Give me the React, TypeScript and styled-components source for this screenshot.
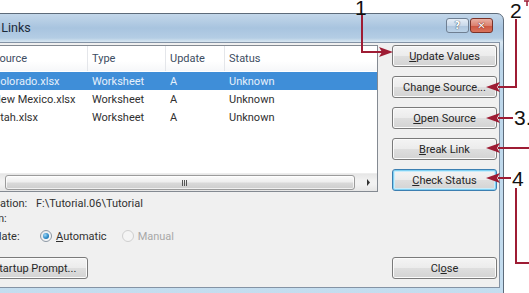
import React from "react";
import styled, { createGlobalStyle, css } from "styled-components";

const Global = createGlobalStyle`
  html, body { margin: 0; padding: 0; background: #ffffff; }
  body { font-family: Roboto, "Noto Sans", "DejaVu Sans", sans-serif; }
  * { box-sizing: border-box; }
`;

const Viewport = styled.div`
  position: relative;
  width: 529px;
  height: 293px;
  overflow: hidden;
  background: #ffffff;
  padding-top: 13px;
`;

const Dialog = styled.div`
  margin-left: -34px;
  width: 538px;
  height: 300px;
  border: 1px solid #5d6b7a;
  border-radius: 7px 7px 0 0;
  background: linear-gradient(to bottom, #c3d7ea 0%, #a8c4df 14px, #b4cde4 24px, #d9e7f2 28px, #bcd6ea 40px, #c5def0 100%);
  display: flex;
  flex-direction: column;
  padding: 0 3px;
`;

const TitleBar = styled.div`
  height: 28px;
  display: flex;
  align-items: flex-start;
  justify-content: space-between;
  padding: 0 7px 0 7px;
`;

const Title = styled.div`
  font-size: 12.5px;
  color: #1c2a3a;
  line-height: 28px;
  padding-bottom: 2px;
`;

const CaptionGroup = styled.div`
  display: flex;
  margin-top: 4px;
  gap: 1px;
`;

const CaptionButton = styled.div<{ $kind: "help" | "close" }>`
  width: 23px;
  height: 15px;
  border: 1px solid #6f7f92;
  border-radius: 3px;
  display: flex;
  align-items: center;
  justify-content: center;
  font-family: "DejaVu Sans", sans-serif;
  font-weight: bold;
  font-size: 10px;
  color: #ffffff;
  text-shadow: 0 0 1px #3a4c60, 0 0 1px #3a4c60;
  ${(p) =>
    p.$kind === "help"
      ? css`
          background: linear-gradient(to bottom, #e6eef7 0%, #c9d9ea 50%, #aec5dd 51%, #bcd3e8 100%);
        `
      : css`
          border-color: #7a3228;
          background: linear-gradient(to bottom, #eab0a3 0%, #dc8270 50%, #cc5540 51%, #da735c 100%);
          text-shadow: 0 0 1px #6a1c12, 0 0 1px #6a1c12;
        `}
`;

const Client = styled.div`
  height: 246px;
  border: 1px solid #8493a5;
  background: #f0f0f0;
  display: flex;
  gap: 14px;
  padding: 2px 2px 8px 10px;
`;

const LeftColumn = styled.div`
  width: 397px;
  display: flex;
  flex-direction: column;
`;

const RightColumn = styled.div`
  width: 105px;
  display: flex;
  flex-direction: column;
  gap: 9px;
`;

const ListBox = styled.div`
  height: 147px;
  border: 1px solid #848a92;
  background: #ffffff;
  display: flex;
  flex-direction: column;
`;

const Row = styled.div<{ $header?: boolean; $selected?: boolean }>`
  display: grid;
  grid-template-columns: 105px 78px 59px 1fr;
  height: 18px;
  align-items: center;
  font-size: 11px;
  color: #303030;
  ${(p) =>
    p.$header &&
    css`
      height: 25px;
      color: #3d4d62;
      background: linear-gradient(to bottom, #ffffff 0%, #ffffff 60%, #f6f7f9 100%);
      margin-bottom: 1px;
    `}
  ${(p) =>
    p.$selected &&
    css`
      background: #3f8ed8;
      color: #e6f0fb;
    `}
`;

const Cell = styled.div<{ $first?: boolean; $header?: boolean }>`
  padding-left: ${(p) => (p.$first ? "11px" : "5px")};
  white-space: nowrap;
  overflow: hidden;
  height: 100%;
  display: flex;
  align-items: center;
  ${(p) =>
    p.$header &&
    !p.$first &&
    css`
      border-left: 1px solid #e4e6ea;
      padding-left: 4px;
    `}
`;

const RowsArea = styled.div`
  flex: 1;
  display: flex;
  flex-direction: column;
`;

const ScrollBar = styled.div`
  height: 18px;
  display: flex;
  background: linear-gradient(to bottom, #e6e6e6, #f2f2f2 40%, #f2f2f2 60%, #e6e6e6);
  border-top: 1px solid #ededed;
`;

const ScrollArrow = styled.div`
  width: 17px;
  display: flex;
  align-items: center;
  justify-content: center;
`;

const ScrollTrack = styled.div`
  flex: 1;
  display: flex;
  align-items: center;
  padding: 0 5px 0 6px;
`;

const Thumb = styled.div`
  flex: 1;
  height: 15px;
  border: 1px solid #9b9b9b;
  border-radius: 3px;
  background: linear-gradient(to bottom, #fbfbfb 0%, #eeeeee 45%, #d9d9d9 55%, #cdcdcd 100%);
  box-shadow: inset 0 0 0 1px rgba(255, 255, 255, 0.7);
  display: flex;
  align-items: center;
  justify-content: center;
`;

const Grip = styled.div`
  display: flex;
  gap: 1px;
  margin-left: 8px;
  & > span {
    width: 1px;
    height: 6px;
    background: #555;
  }
`;

const InfoGrid = styled.div`
  display: grid;
  grid-template-columns: 55px 1fr;
  grid-auto-rows: 15px;
  margin-top: 4px;
  font-size: 11px;
  color: #303030;
  align-items: center;
`;

const Label = styled.div<{ $gap?: boolean }>`
  padding-left: 1px;
  white-space: nowrap;
  ${(p) => p.$gap && css`margin-top: 5px;`}
`;

const Value = styled.div<{ $gap?: boolean }>`
  white-space: nowrap;
  display: flex;
  align-items: center;
  ${(p) => p.$gap && css`margin-top: 5px;`}
`;

const RadioItem = styled.label<{ $disabled?: boolean; $lead?: number }>`
  display: flex;
  align-items: center;
  gap: 4px;
  margin-left: ${(p) => p.$lead ?? 0}px;
  color: ${(p) => (p.$disabled ? "#a8a8a8" : "#303030")};
`;

const RadioCircle = styled.span<{ $checked?: boolean; $disabled?: boolean }>`
  width: 12px;
  height: 12px;
  border-radius: 50%;
  border: 1px solid ${(p) => (p.$disabled ? "#cfcfcf" : "#8d98a4")};
  background: ${(p) => (p.$disabled ? "#f4f4f4" : "linear-gradient(135deg, #e3e6ea, #fbfbfb)")};
  display: flex;
  align-items: center;
  justify-content: center;
  &::after {
    content: "";
    display: ${(p) => (p.$checked ? "block" : "none")};
    width: 6px;
    height: 6px;
    border-radius: 50%;
    background: radial-gradient(circle at 35% 35%, #9fd6f5 0%, #2e8bc9 55%, #1a5f94 100%);
  }
`;

const Button = styled.div<{ $focused?: boolean; $bottom?: boolean; $width?: number }>`
  height: 22px;
  width: ${(p) => (p.$width ? `${p.$width}px` : "100%")};
  flex-shrink: 0;
  border: 1px solid #7a7a7a;
  border-radius: 3px;
  background: linear-gradient(to bottom, #f4f4f4 0%, #ececec 48%, #dedede 52%, #d3d3d3 100%);
  box-shadow: inset 0 0 0 1px #fbfbfb;
  display: flex;
  align-items: center;
  justify-content: center;
  font-size: 11px;
  color: #262626;
  white-space: nowrap;
  ${(p) => p.$bottom && css`margin-top: auto;`}
  ${(p) =>
    p.$focused &&
    css`
      border-color: #3c7fb1;
      box-shadow: inset 0 0 0 1px #7fd0f2, inset 0 0 0 2px #c9ecfa;
    `}
`;

const StartupRow = styled.div`
  margin-top: auto;
`;

const Key = styled.span`
  text-decoration: underline;
`;

const Overlay = styled.svg`
  position: absolute;
  left: 0;
  top: 0;
  pointer-events: none;
`;

const Callout = styled.span<{ $x: number; $y: number }>`
  position: absolute;
  left: ${(p) => p.$x}px;
  top: ${(p) => p.$y}px;
  font-family: "Liberation Sans", Arial, sans-serif;
  font-size: 21px;
  line-height: 21px;
  color: #111;
`;

const rows = [
  { source: "Colorado.xlsx", type: "Worksheet", update: "A", status: "Unknown", selected: true },
  { source: "New Mexico.xlsx", type: "Worksheet", update: "A", status: "Unknown" },
  { source: "Utah.xlsx", type: "Worksheet", update: "A", status: "Unknown" },
];

const RED = "#9e1c34";

function leftArrow(tx: number, ty: number) {
  return `M${tx} ${ty} L${tx + 14} ${ty - 5} L${tx + 11} ${ty} L${tx + 14} ${ty + 5} Z`;
}

export default function App() {
  return (
    <Viewport>
      <Global />
      <Dialog>
        <TitleBar>
          <Title>Edit Links</Title>
          <CaptionGroup>
            <CaptionButton $kind="help">?</CaptionButton>
            <CaptionButton $kind="close">✕</CaptionButton>
          </CaptionGroup>
        </TitleBar>
        <Client>
          <LeftColumn>
            <ListBox>
              <Row $header>
                <Cell $first $header>Source</Cell>
                <Cell $header>Type</Cell>
                <Cell $header>Update</Cell>
                <Cell $header>Status</Cell>
              </Row>
              <RowsArea>
                {rows.map((r) => (
                  <Row key={r.source} $selected={r.selected}>
                    <Cell $first>{r.source}</Cell>
                    <Cell>{r.type}</Cell>
                    <Cell>{r.update}</Cell>
                    <Cell>{r.status}</Cell>
                  </Row>
                ))}
              </RowsArea>
              <ScrollBar>
                <ScrollArrow>
                  <svg width="5" height="7" viewBox="0 0 5 7"><path d="M4 0 L0 3.5 L4 7 Z" fill="#333" /></svg>
                </ScrollArrow>
                <ScrollTrack>
                  <Thumb>
                    <Grip><span /><span /><span /></Grip>
                  </Thumb>
                </ScrollTrack>
                <ScrollArrow>
                  <svg width="5" height="7" viewBox="0 0 5 7"><path d="M1 0 L4 3.5 L1 7 Z" fill="#333" /></svg>
                </ScrollArrow>
              </ScrollBar>
            </ListBox>
            <InfoGrid>
              <Label>Location:</Label>
              <Value>F:\Tutorial.06\Tutorial</Value>
              <Label>Item:</Label>
              <Value />
              <Label $gap>Update:</Label>
              <Value $gap>
                <RadioItem $lead={4}>
                  <RadioCircle $checked />
                  <span><Key>A</Key>utomatic</span>
                </RadioItem>
                <RadioItem $disabled $lead={15}>
                  <RadioCircle $disabled />
                  <span>Manual</span>
                </RadioItem>
              </Value>
            </InfoGrid>
            <StartupRow>
              <Button $width={107}>Startup Prompt...</Button>
            </StartupRow>
          </LeftColumn>
          <RightColumn>
            <Button><Key>U</Key>pdate Values</Button>
            <Button>Chan<Key>g</Key>e Source...</Button>
            <Button><Key>O</Key>pen Source</Button>
            <Button><Key>B</Key>reak Link</Button>
            <Button $focused><Key>C</Key>heck Status</Button>
            <Button $bottom>Cl<Key>o</Key>se</Button>
          </RightColumn>
        </Client>
      </Dialog>

      <Overlay width="529" height="293" viewBox="0 0 529 293">
        <g fill="none" stroke={RED} strokeWidth="2">
          <path d="M362 15 V52 H382" />
          <path d="M516 19 V87 H498" />
          <path d="M524 1 H529 M527 1 V6" strokeWidth="1.5" />
          <path d="M513 118 H498" />
          <path d="M529 148 H498" />
          <path d="M511 178 H498" />
          <path d="M516 188 V263 H529" />
        </g>
        <g fill={RED}>
          <path d="M393 52 L379 47 L382 52 L379 57 Z" />
          <path d={leftArrow(486, 87)} />
          <path d={leftArrow(486, 118)} />
          <path d={leftArrow(486, 148)} />
          <path d={leftArrow(486, 178)} />
        </g>
      </Overlay>
      <Callout $x={355} $y={-3}>1</Callout>
      <Callout $x={510} $y={0}>2</Callout>
      <Callout $x={514} $y={107}>3.</Callout>
      <Callout $x={512} $y={168}>4</Callout>
    </Viewport>
  );
}
